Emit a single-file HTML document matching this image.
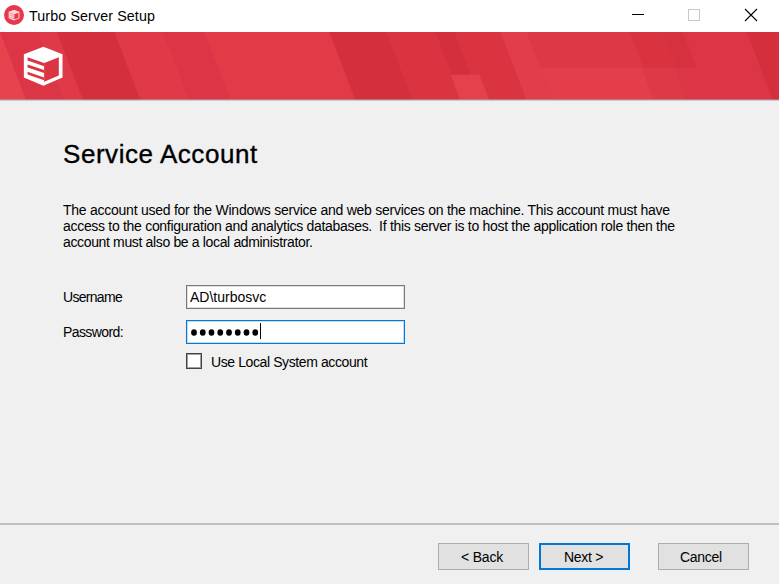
<!DOCTYPE html>
<html><head><meta charset="utf-8">
<style>
html,body{margin:0;padding:0;}
body{width:779px;height:584px;position:relative;overflow:hidden;background:#f0f0f0;font-family:"Liberation Sans",sans-serif;color:#000;}
.abs{position:absolute;white-space:nowrap;}
#titlebar{position:absolute;left:0;top:0;width:779px;height:32px;background:#fff;}
#banner{position:absolute;left:0;top:32px;width:779px;height:68px;}
.t{position:absolute;white-space:nowrap;line-height:1;}
.box{position:absolute;background:#fff;box-sizing:border-box;}
.btn{position:absolute;box-sizing:border-box;background:#e1e1e1;border:1px solid #adadad;height:27px;width:91px;top:543px;}
</style></head>
<body>
<div id="titlebar">
  <svg class="abs" style="left:4px;top:5px" width="20" height="20" viewBox="0 0 20 20">
    <circle cx="10" cy="10" r="10" fill="#e8374a"/>
    <svg x="4" y="4.2" width="12" height="12" viewBox="0 0 570 584">
      <polygon points="290,25 550,125 550,440 290,555 25,440 25,125" fill="#f9d6da"/>
      <polygon points="300,243 500,168 500,415 300,500" fill="#e8374a"/>
      <polygon points="75,170 300,243 300,282 75,203" fill="#eb6d7a"/>
      <polygon points="75,266 300,340 300,372 75,298" fill="#eb6d7a"/>
      <polygon points="75,364 300,440 300,472 75,396" fill="#eb6d7a"/>
    </svg>
  </svg>
  <div class="t" style="left:29px;top:8.5px;font-size:14.3px;letter-spacing:0.1px;color:#000">Turbo Server Setup</div>
  <div class="abs" style="left:632px;top:14px;width:12px;height:1px;background:#000"></div>
  <div class="abs" style="left:688px;top:9px;width:10px;height:10px;border:1px solid #c8c8c8"></div>
  <svg class="abs" style="left:744px;top:8px" width="14" height="14" viewBox="0 0 14 14">
    <path d="M1 1 L13 13 M13 1 L1 13" stroke="#000" stroke-width="1.1"/>
  </svg>
</div>
<svg id="banner" width="779" height="68" viewBox="0 0 779 67" preserveAspectRatio="none">
  <rect x="0" y="0" width="779" height="68" fill="#dc3545"/>
  <polygon points="-30.0,0.0 0.0,0.0 26.0,67.0 -4.0,67.0" fill="#e6434f"/>
  <polygon points="38.0,0.0 57.0,0.0 83.0,67.0 64.0,67.0" fill="#e03a48"/>
  <polygon points="57.0,0.0 114.5,0.0 140.5,67.0 83.0,67.0" fill="#d42f3c"/>
  <polygon points="114.5,0.0 163.0,0.0 189.0,67.0 140.5,67.0" fill="#e03a48"/>
  <polygon points="204.5,0.0 329.5,0.0 355.5,67.0 230.5,67.0" fill="#e13b48"/>
  <polygon points="329.5,0.0 386.5,0.0 412.5,67.0 355.5,67.0" fill="#d42f3c"/>
  <polygon points="386.5,0.0 435.5,0.0 461.5,67.0 412.5,67.0" fill="#da3441"/>
  <polygon points="435.5,0.0 454.5,0.0 470.8,42.0 451.8,42.0" fill="#d42f3c"/>
  <polygon points="454.5,0.0 500.5,0.0 526.5,67.0 480.5,67.0" fill="#da3441"/>
  <polygon points="450.8,42.0 479.4,42.0 489.4,67.0 460.1,67.0" fill="#e5414d"/>
  <polygon points="500.5,0.0 527.0,0.0 553.0,67.0 526.5,67.0" fill="#e23d4a"/>
  <polygon points="527.0,0.0 630.0,0.0 643.8,35.5 540.8,35.5" fill="#dd3846"/>
  <polygon points="630.0,0.0 663.0,0.0 676.8,35.5 643.8,35.5" fill="#d8333f"/>
  <polygon points="663.0,0.0 683.0,0.0 696.8,35.5 676.8,35.5" fill="#d6313e"/>
  <polygon points="683.0,0.0 747.0,0.0 760.8,35.5 696.8,35.5" fill="#dc3545"/>
  <polygon points="540.8,35.5 642.0,35.5 654.2,67.0 553.0,67.0" fill="#e43e4b"/>
  <polygon points="642.0,35.5 674.8,35.5 687.0,67.0 654.2,67.0" fill="#de3946"/>
  <polygon points="674.8,35.5 760.8,35.5 773.0,67.0 687.0,67.0" fill="#dc3545"/>
  <polygon points="747.0,0.0 820.0,0.0 846.0,67.0 773.0,67.0" fill="#d42f3c"/>
</svg>
<div class="abs" style="left:0;top:99px;width:779px;height:1px;background:rgba(165,170,170,0.55)"></div>
<div class="abs" style="left:0;top:100px;width:779px;height:1px;background:#cacdcd"></div>
<svg class="abs" style="left:22px;top:45px" width="42" height="43" viewBox="0 0 570 584">
  <polygon points="290,25 550,125 550,440 290,555 25,440 25,125" fill="#fff"/>
  <polygon points="300,243 500,168 500,415 300,500" fill="#dc3542"/>
  <polygon points="75,168 300,243 300,288 75,210" fill="#dc3542"/>
  <polygon points="75,264 300,340 300,380 75,304" fill="#dc3542"/>
  <polygon points="75,362 300,440 300,480 75,402" fill="#dc3542"/>
</svg>

<div class="t" style="left:63px;top:141px;font-size:26px;letter-spacing:0.55px;-webkit-text-stroke:0.35px #000;">Service Account</div>

<div class="t" style="left:63px;top:202px;font-size:14px;letter-spacing:-0.25px;line-height:16px;">The account used for the Windows service and web services on the machine. This account must have<br><span style="letter-spacing:-0.3px">access to the configuration and analytics databases.&nbsp; If this server is to host the application role then the</span><br><span style="letter-spacing:-0.35px">account must also be a local administrator.</span></div>

<div class="t" style="left:63px;top:290px;font-size:14px;letter-spacing:-0.7px;">Username</div>
<div class="t" style="left:63px;top:325px;font-size:14px;letter-spacing:-0.6px;">Password:</div>

<div class="box" style="left:186px;top:285px;width:219px;height:24px;border:1px solid #7a7a7a;box-shadow:inset 0 0 0 1px rgba(122,122,122,0.25);"></div>
<div class="t" style="left:190px;top:290px;font-size:14px;">AD\turbosvc</div>
<div class="box" style="left:186px;top:320px;width:219px;height:24px;border:1px solid #0078d7;box-shadow:inset 0 0 0 1px rgba(0,120,215,0.25);"></div>
<div class="abs" style="left:191px;top:328px;">
  <svg style="display:block" width="70" height="9" viewBox="0 0 70 9"><ellipse cx="3.00" cy="4.5" rx="2.85" ry="3.25" fill="#000"/><ellipse cx="11.75" cy="4.5" rx="2.85" ry="3.25" fill="#000"/><ellipse cx="20.50" cy="4.5" rx="2.85" ry="3.25" fill="#000"/><ellipse cx="29.25" cy="4.5" rx="2.85" ry="3.25" fill="#000"/><ellipse cx="38.00" cy="4.5" rx="2.85" ry="3.25" fill="#000"/><ellipse cx="46.75" cy="4.5" rx="2.85" ry="3.25" fill="#000"/><ellipse cx="55.50" cy="4.5" rx="2.85" ry="3.25" fill="#000"/><ellipse cx="64.25" cy="4.5" rx="2.85" ry="3.25" fill="#000"/></svg>
</div>
<div class="abs" style="left:260px;top:323px;width:1px;height:16px;background:#000"></div>

<div class="box" style="left:186px;top:353px;width:16px;height:16px;border:1px solid #444;box-shadow:inset 0 0 0 1px rgba(80,80,80,0.55);"></div>
<div class="t" style="left:211px;top:355px;font-size:14px;letter-spacing:-0.4px;">Use Local System account</div>

<div class="abs" style="left:0;top:523px;width:779px;height:2px;background:#bfbfbf"></div>

<div class="btn" style="left:438px;"></div>
<div class="t" style="left:461px;top:550px;font-size:14px;letter-spacing:-0.2px;">&lt; Back</div>
<div class="btn" style="left:539px;border:2px solid #0078d7;"></div>
<div class="t" style="left:564px;top:550px;font-size:14px;letter-spacing:-0.3px;">Next &gt;</div>
<div class="btn" style="left:658px;"></div>
<div class="t" style="left:680px;top:550px;font-size:14px;letter-spacing:-0.3px;">Cancel</div>
</body></html>
